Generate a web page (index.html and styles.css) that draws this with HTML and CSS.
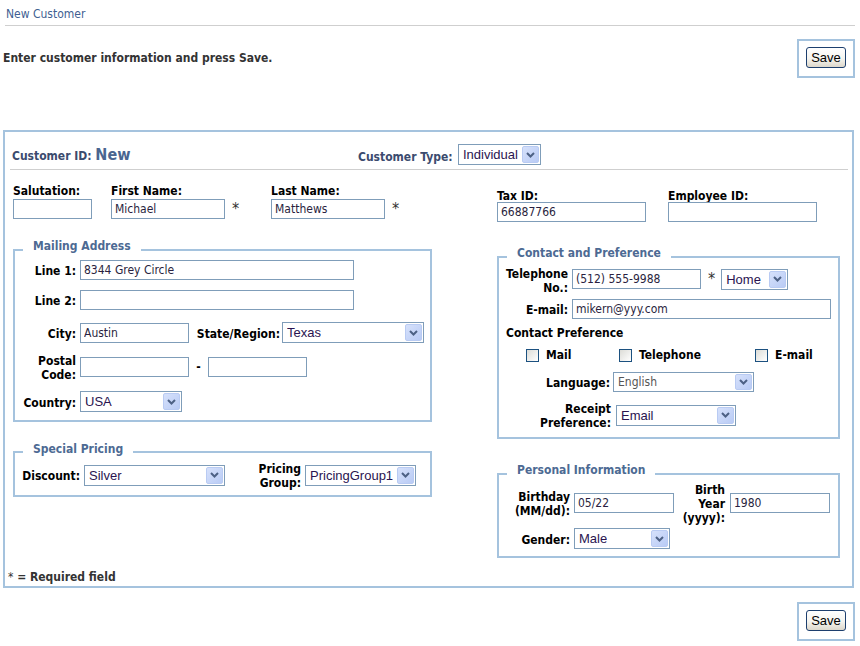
FILE: index.html
```html
<!DOCTYPE html>
<html>
<head>
<meta charset="utf-8">
<title>New Customer</title>
<link rel="stylesheet" href="styles.css">
</head>
<body>
<div class="page">
  <div class="title">New Customer</div>
  <div class="intro">
    <span class="intro-text">Enter customer information and press Save.</span>
    <div class="savebox"><button class="btn">Save</button></div>
  </div>

  <div class="panel">
    <div class="panel-head">
      <div class="cid"><span class="cid-label">Customer ID:</span> <span class="cid-val">New</span></div>
      <div class="ctype">
        <span class="ctype-label">Customer Type:</span>
        <div class="sel w-ctype"><span class="val">Individual</span><span class="arr"><svg width="9" height="6" viewBox="0 0 9 6"><path d="M1 1L4.5 4.5L8 1" fill="none" stroke="#4d6185" stroke-width="2"/></svg></span></div>
      </div>
    </div>

    <div class="panel-body">
      <div class="col-left">
        <div class="names">
          <div class="fld f-sal">
            <label class="top-lbl">Salutation:</label>
            <div class="inrow"><input class="inp w-sal" value=""></div>
          </div>
          <div class="fld f-first">
            <label class="top-lbl">First Name:</label>
            <div class="inrow"><input class="inp w-name" value="Michael"><span class="ast">*</span></div>
          </div>
          <div class="fld f-last">
            <label class="top-lbl">Last Name:</label>
            <div class="inrow"><input class="inp w-name" value="Matthews"><span class="ast">*</span></div>
          </div>
        </div>

        <fieldset class="fs fs-mail">
          <legend>Mailing Address</legend>
          <div class="row m-r1"><span class="lbl lw-mail">Line 1:</span><input class="inp w-line" value="8344 Grey Circle"></div>
          <div class="row m-r2"><span class="lbl lw-mail">Line 2:</span><input class="inp w-line" value=""></div>
          <div class="row m-r3"><span class="lbl lw-mail">City:</span><input class="inp w-city" value="Austin"><span class="lbl lbl-state">State/Region:</span><div class="sel w-state"><span class="val">Texas</span><span class="arr"><svg width="9" height="6" viewBox="0 0 9 6"><path d="M1 1L4.5 4.5L8 1" fill="none" stroke="#4d6185" stroke-width="2"/></svg></span></div></div>
          <div class="row m-r4"><span class="lbl lw-mail">Postal<br>Code:</span><input class="inp w-city" value=""><span class="dash">-</span><input class="inp w-zip2" value=""></div>
          <div class="row m-r5"><span class="lbl lw-mail">Country:</span><div class="sel w-country"><span class="val">USA</span><span class="arr"><svg width="9" height="6" viewBox="0 0 9 6"><path d="M1 1L4.5 4.5L8 1" fill="none" stroke="#4d6185" stroke-width="2"/></svg></span></div></div>
        </fieldset>

        <fieldset class="fs fs-price">
          <legend>Special Pricing</legend>
          <div class="row p-r1"><span class="lbl lw-disc">Discount:</span><div class="sel w-disc"><span class="val">Silver</span><span class="arr"><svg width="9" height="6" viewBox="0 0 9 6"><path d="M1 1L4.5 4.5L8 1" fill="none" stroke="#4d6185" stroke-width="2"/></svg></span></div><span class="lbl lw-pg">Pricing<br>Group:</span><div class="sel w-pg"><span class="val">PricingGroup1</span><span class="arr"><svg width="9" height="6" viewBox="0 0 9 6"><path d="M1 1L4.5 4.5L8 1" fill="none" stroke="#4d6185" stroke-width="2"/></svg></span></div></div>
        </fieldset>
      </div>

      <div class="col-right">
        <div class="ids">
          <div class="fld f-tax">
            <label class="top-lbl">Tax ID:</label>
            <input class="inp w-id" value="66887766">
          </div>
          <div class="fld">
            <label class="top-lbl">Employee ID:</label>
            <input class="inp w-id" value="">
          </div>
        </div>

        <fieldset class="fs fs-contact">
          <legend>Contact and Preference</legend>
          <div class="row c-r1"><span class="lbl lw-tel">Telephone<br>No.:</span><input class="inp w-tel" value="(512) 555-9988"><span class="ast ast-tel">*</span><div class="sel w-home"><span class="val">Home</span><span class="arr"><svg width="9" height="6" viewBox="0 0 9 6"><path d="M1 1L4.5 4.5L8 1" fill="none" stroke="#4d6185" stroke-width="2"/></svg></span></div></div>
          <div class="row c-r2"><span class="lbl lw-tel">E-mail:</span><input class="inp w-mail" value="mikern@yyy.com"></div>
          <div class="cp-title">Contact Preference</div>
          <div class="row c-checks">
            <label class="chk ck1"><span class="box"></span>Mail</label>
            <label class="chk ck2"><span class="box"></span>Telephone</label>
            <label class="chk"><span class="box"></span>E-mail</label>
          </div>
          <div class="row c-r3"><span class="lbl lw-lang">Language:</span><div class="sel w-lang sel-thin"><span class="val val-t">English</span><span class="arr"><svg width="9" height="6" viewBox="0 0 9 6"><path d="M1 1L4.5 4.5L8 1" fill="none" stroke="#4d6185" stroke-width="2"/></svg></span></div></div>
          <div class="row c-r4"><span class="lbl lw-rec">Receipt<br>Preference:</span><div class="sel w-rec"><span class="val">Email</span><span class="arr"><svg width="9" height="6" viewBox="0 0 9 6"><path d="M1 1L4.5 4.5L8 1" fill="none" stroke="#4d6185" stroke-width="2"/></svg></span></div></div>
        </fieldset>

        <fieldset class="fs fs-personal">
          <legend>Personal Information</legend>
          <div class="row b-r1"><span class="lbl lw-bday">Birthday<br>(MM/dd):</span><input class="inp w-bday" value="05/22"><span class="lbl lw-byear">Birth<br>Year<br>(yyyy):</span><input class="inp w-bday" value="1980"></div>
          <div class="row b-r2"><span class="lbl lw-bday">Gender:</span><div class="sel w-gender"><span class="val">Male</span><span class="arr"><svg width="9" height="6" viewBox="0 0 9 6"><path d="M1 1L4.5 4.5L8 1" fill="none" stroke="#4d6185" stroke-width="2"/></svg></span></div></div>
        </fieldset>
      </div>
    </div>

    <div class="req"><span class="req-ast">*</span> = Required field</div>
  </div>

  <div class="bottom">
    <div class="savebox"><button class="btn">Save</button></div>
  </div>
</div>
</body>
</html>
```

FILE: styles.css
```css
* { box-sizing: border-box; }

body {
  margin: 0;
  background: #fff;
  font-family: "DejaVu Sans Condensed", "DejaVu Sans", sans-serif;
  font-size: 12px;
  color: #000;
}

.page { width: 860px; padding-top: 7px; }

.title {
  margin: 0 5px;
  padding: 0 0 4px 1px;
  line-height: 14px;
  border-bottom: 1px solid #cfcfcf;
  color: #3f5f92;
}

.intro {
  display: flex;
  align-items: center;
  justify-content: space-between;
  margin-top: 13px;
  padding: 0 5px 0 3px;
}
.intro-text { font-weight: bold; color: #333; line-height: 14px; margin-top: -2px; }

.savebox {
  width: 58px;
  height: 39px;
  border: 2px solid #a5c3de;
  padding: 6px 0 0 7px;
}
.btn {
  display: block;
  width: 40px;
  height: 21px;
  padding: 0;
  border: 1px solid #1d3f6e;
  border-radius: 3px;
  background: linear-gradient(#ffffff, #f5f4ef 55%, #dcd7cb);
  font: 13px "Liberation Sans", Arial, sans-serif;
  color: #000;
}

.panel {
  margin: 52px 0 0 3px;
  width: 851px;
  border: 2px solid #a5c3de;
  padding-bottom: 3px;
}

.panel-head {
  display: flex;
  align-items: center;
  margin: 0 4px 0 5px;
  padding: 12px 0 4px 0;
  border-bottom: 1px solid #cfcfcf;
}
.cid { width: 348px; padding-left: 2px; font-weight: bold; color: #3b4b6e; }
.cid-label { font-size: 12px; }
.cid-val { font-size: 16px; color: #4a6590; }
.ctype { display: flex; align-items: center; }
.ctype-label { font-weight: bold; color: #3b4b6e; margin-right: 5px; width: 95px; padding-top: 4px; }

/* inputs */
.inp {
  height: 20px;
  border: 1px solid #7f9db9;
  padding: 0 3px;
  margin: 0;
  font-family: "DejaVu Sans Condensed", "DejaVu Sans", sans-serif;
  font-size: 12px;
  color: #2a1f40;
  background: #fff;
  outline: none;
}

/* fake select */
.sel {
  display: flex;
  align-items: center;
  justify-content: space-between;
  height: 21px;
  border: 1px solid #7f9db9;
  background: #fff;
  padding: 1px 1px 1px 4px;
  font: 13px "Liberation Sans", Arial, sans-serif;
  color: #2a1450;
}
.sel-thin { height: 20px; }
.sel .val { white-space: nowrap; overflow: hidden; }
.val-t { font-family: "DejaVu Sans Condensed", "DejaVu Sans", sans-serif; font-size: 12px; color: #555; }
.arr {
  flex: none;
  display: flex;
  align-items: center;
  justify-content: center;
  width: 17px;
  height: 100%;
  border: 1px solid #b9cbf3;
  border-radius: 2px;
  background: linear-gradient(135deg, #d6e1fb, #b9cbf5);
}

.w-ctype { width: 83px; }
.w-state { width: 142px; }
.w-country { width: 102px; }
.w-disc { width: 141px; }
.w-pg { width: 111px; }
.w-home { width: 67px; }
.w-lang { width: 141px; }
.w-rec { width: 120px; }
.w-gender { width: 96px; }

.w-sal { width: 79px; }
.w-name { width: 114px; }
.w-line { width: 274px; }
.w-city { width: 109px; }
.w-zip2 { width: 99px; }
.w-id { width: 149px; }
.w-tel { width: 129px; }
.w-mail { width: 259px; }
.w-bday { width: 100px; }

/* body layout */
.panel-body { display: flex; align-items: flex-start; padding-left: 8px; }
.col-left { width: 419px; padding-top: 12px; }
.col-right { width: 343px; margin-left: 65px; padding-top: 18px; }

.names, .ids { display: flex; }
.fld { display: flex; flex-direction: column; }
.top-lbl { font-weight: bold; line-height: 14px; padding-top: 2px; }
.names .inrow { display: flex; align-items: center; margin-top: 1px; }
.ids .top-lbl { padding-top: 1px; margin-bottom: -1px; }
.f-sal { width: 98px; }
.f-first { width: 160px; }
.f-tax { width: 171px; }

.ast { font-size: 16px; color: #333; margin-left: 7px; line-height: 14px; }
.ast-tel { margin-left: 7px; margin-right: 6px; }

/* fieldsets */
.fs {
  border: 2px solid #a5c3de;
  margin: 0;
  padding: 0 0 8px 0;
  min-width: 0;
}
.fs legend {
  margin-left: 8px;
  padding: 2px 10px 10px;
  font-weight: bold;
  font-size: 12px;
  line-height: 12px;
  color: #4d6a93;
}
.fs-mail { margin-top: 19px; }
.fs-price { margin-top: 18px; padding-bottom: 6px; }
.fs-price legend { padding-top: 3px; padding-bottom: 9px; }
.fs-contact { margin-top: 23px; padding-bottom: 8px; }
.fs-personal { margin-top: 23px; padding-bottom: 7px; }

.row { display: flex; align-items: center; }
.lbl { font-weight: bold; line-height: 14px; text-align: right; flex: none; }
.row > .lbl { padding-top: 2px; }

.lw-mail { width: 61px; margin-right: 4px; }
.lbl-state { margin: 0 2px 0 4px; width: 87px; }
.dash { width: 19px; text-align: center; font-weight: bold; }

.m-r1 { margin-top: -2px; height: 20px; }
.m-r2 { margin-top: 10px; height: 20px; }
.m-r3 { margin-top: 12px; height: 21px; }
.m-r4 { margin-top: 10px; height: 28px; }
.m-r5 { margin-top: 10px; height: 21px; }

.lw-disc { width: 65px; margin-right: 4px; }
.lw-pg { width: 76px; margin-right: 4px; }
.p-r1 { margin-top: -3px; height: 28px; }

.lw-tel { width: 69px; margin-right: 4px; }
.c-r1 { margin-top: -4px; height: 28px; }
.c-r1 > .lbl { padding-top: 3px; }
.c-r2 { margin-top: 6px; height: 20px; }
.cp-title { margin-top: 5px; padding-left: 7px; font-weight: bold; line-height: 14px; padding-top: 2px; }
.c-checks { margin-top: 8px; height: 14px; padding-left: 27px; }
.chk { display: flex; align-items: center; font-weight: bold; line-height: 14px; }
.ck1 { width: 93px; }
.ck2 { width: 136px; }
.box {
  width: 13px;
  height: 13px;
  border: 1px solid #1c5180;
  background: linear-gradient(135deg, #dcdcd7, #ffffff);
  margin-right: 7px;
  flex: none;
}
.lw-lang { width: 111px; margin-right: 3px; }
.c-r3 { margin-top: 10px; height: 20px; }
.lw-rec { width: 112px; margin-right: 5px; }
.c-r4 { margin-top: 9px; height: 28px; }

.lw-bday { width: 71px; margin-right: 4px; }
.lw-byear { width: 51px; margin-right: 5px; }
.b-r1 { margin-top: -4px; height: 42px; }
.b-r2 { margin-top: 4px; height: 21px; }

.req { margin-top: 11px; padding-left: 3px; line-height: 14px; font-weight: bold; color: #333; padding-top: 1px; margin-bottom: -1px; }
.req-ast { font-weight: normal; }

.bottom { display: flex; justify-content: flex-end; margin-top: 14px; padding-right: 5px; }
```
